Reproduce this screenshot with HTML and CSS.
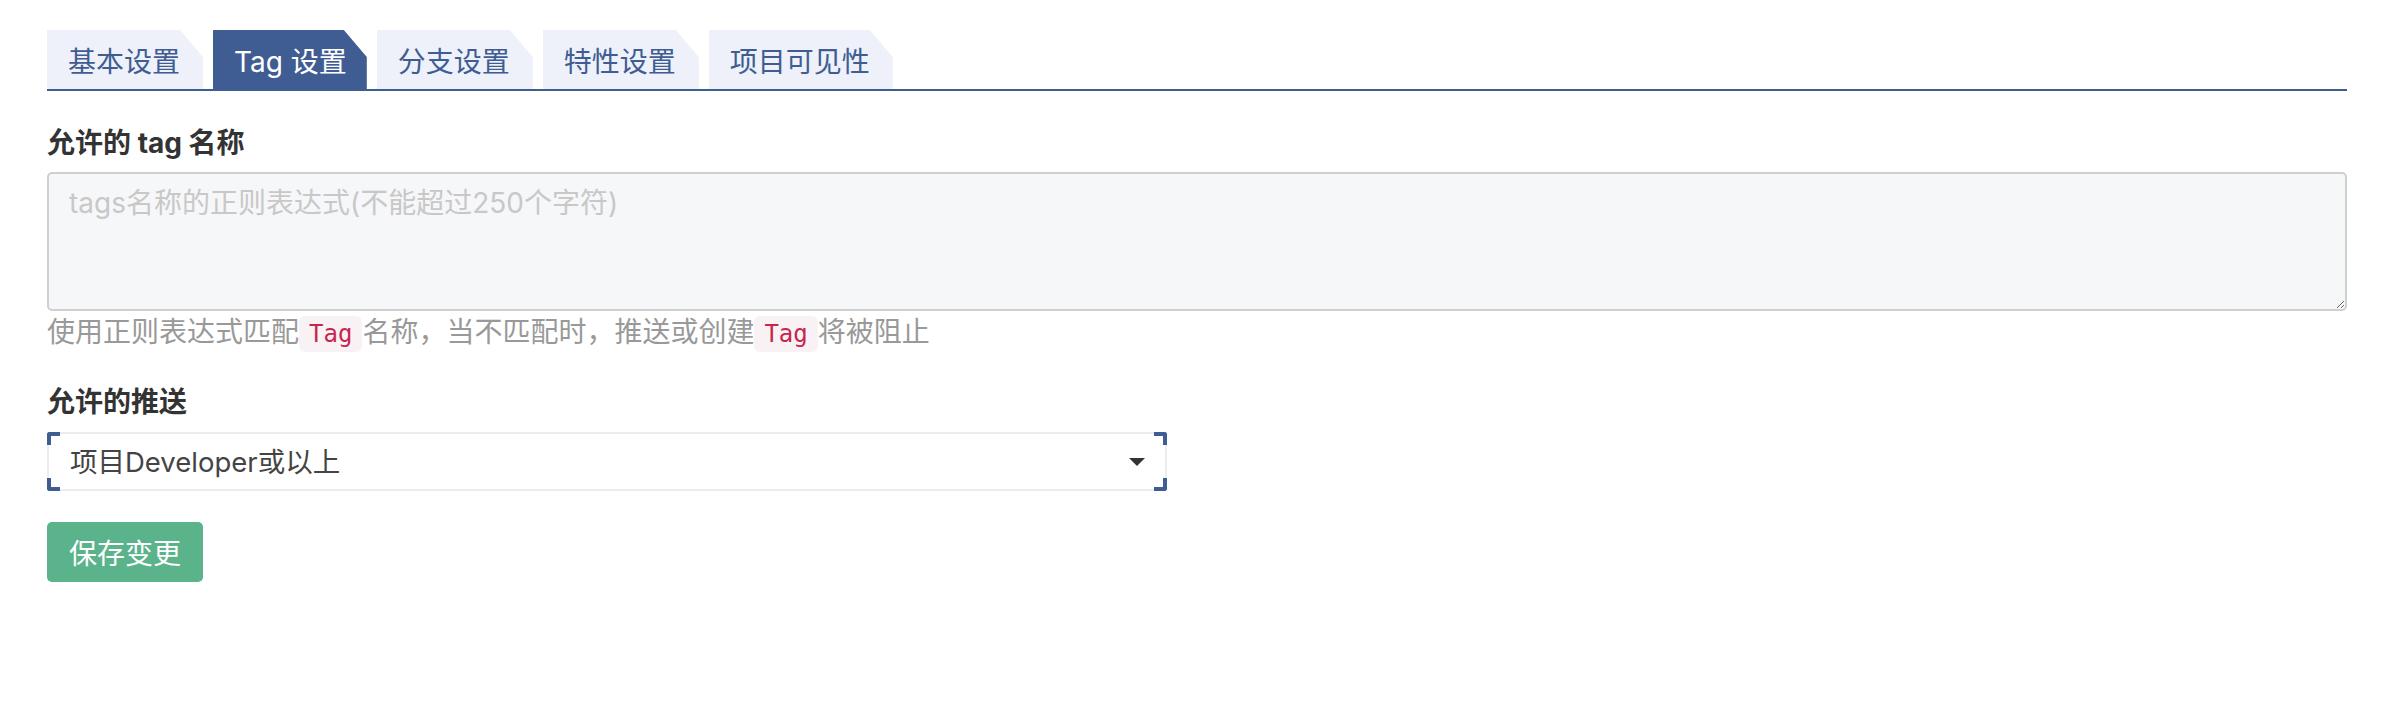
FILE: index.html
```html
<!DOCTYPE html>
<html lang="zh-CN">
<head>
<meta charset="utf-8">
<title>Tag 设置</title>
<link rel="stylesheet" href="styles.css">
</head>
<body>
<div class="page">
  <nav class="tabs">
    <a class="tab" href="#">基本设置</a>
    <a class="tab active" href="#">Tag 设置</a>
    <a class="tab" href="#">分支设置</a>
    <a class="tab" href="#">特性设置</a>
    <a class="tab" href="#">项目可见性</a>
  </nav>
  <form class="form">
    <div class="field">
      <label class="label" for="tagname">允许的 tag 名称</label>
      <textarea id="tagname" class="textarea" placeholder="tags名称的正则表达式(不能超过250个字符)"></textarea>
      <p class="help">使用正则表达式匹配<code>Tag</code>名称，当不匹配时，推送或创建<code>Tag</code>将被阻止</p>
    </div>
    <div class="field">
      <label class="label" for="push">允许的推送</label>
      <div class="select">
        <select id="push" class="select-input">
          <option>项目Developer或以上</option>
          <option>项目Master或以上</option>
        </select>
        <span class="corner tl"></span>
        <span class="corner tr"></span>
        <span class="corner bl"></span>
        <span class="corner br"></span>
      </div>
    </div>
    <button type="button" class="btn">保存变更</button>
  </form>
</div>
</body>
</html>
```

FILE: styles.css
```css
body {
  margin: 0;
  background: #fff;
  color: #333;
  font-family: Inter, "Noto Sans CJK SC", sans-serif;
}

.page {
  padding: 30px 35px 0 47px;
}

.tabs {
  display: flex;
  gap: 10px;
  border-bottom: 2px solid #3f5d92;
}

.tab {
  height: 59px;
  display: flex;
  align-items: center;
  padding: 0 23px 0 21px;
  font-size: 28px;
  color: #3f5d92;
  background: #eef1f9;
  text-decoration: none;
  clip-path: polygon(0 0, calc(100% - 23px) 0, 100% 27px, 100% 100%, 0 100%);
}

.tab.active {
  padding-right: 20px;
  background: #3f5d92;
  color: #fff;
}

.form {
  display: flex;
  flex-direction: column;
  align-items: flex-start;
}

.field {
  align-self: stretch;
}

.label {
  display: block;
  font-size: 28px;
  font-weight: 700;
  line-height: 36px;
  color: #333;
  margin: 34px 0 11px;
}

.field + .field .label {
  margin-top: 31px;
  margin-bottom: 12px;
}

.textarea {
  display: block;
  box-sizing: border-box;
  width: 100%;
  height: 139px;
  margin: 0;
  padding: 10px 20px;
  border: 2px solid #cfcfcf;
  border-radius: 5px;
  background: #f6f7f9;
  font-family: inherit;
  font-size: 28px;
  line-height: 1.4;
  color: #333;
}

.textarea::placeholder {
  color: #c8c8c8;
}

.help {
  margin: 2px 0 0;
  font-size: 28px;
  line-height: 38px;
  color: #999;
}

.help code {
  font-family: "DejaVu Sans Mono", monospace;
  font-size: 24px;
  color: #c7254e;
  background: #f9f2f4;
  padding: 4px 10px;
  border-radius: 6px;
}

.select {
  position: relative;
  width: 1120px;
}

.select::after {
  content: "";
  position: absolute;
  right: 22px;
  top: 26px;
  border-left: 8px solid transparent;
  border-right: 8px solid transparent;
  border-top: 8px solid #333;
  pointer-events: none;
}

.select-input {
  display: block;
  box-sizing: border-box;
  width: 100%;
  height: 59px;
  margin: 0;
  padding: 0 50px 0 21px;
  border: 2px solid #ececec;
  border-radius: 3px;
  background: #fff;
  font-family: inherit;
  font-size: 27.5px;
  color: #444;
  appearance: none;
  -webkit-appearance: none;
  outline: none;
}

.corner {
  position: absolute;
  width: 13px;
  height: 13px;
  border-color: #3f5d92;
  border-style: solid;
  border-width: 0;
  box-sizing: border-box;
}

.corner.tl { left: 0; top: 0; border-top-width: 4px; border-left-width: 4px; border-top-left-radius: 3px; }
.corner.tr { right: 0; top: 0; border-top-width: 4px; border-right-width: 4px; border-top-right-radius: 3px; }
.corner.bl { left: 0; bottom: 0; border-bottom-width: 4px; border-left-width: 4px; border-bottom-left-radius: 3px; }
.corner.br { right: 0; bottom: 0; border-bottom-width: 4px; border-right-width: 4px; border-bottom-right-radius: 3px; }

.btn {
  margin-top: 31px;
  height: 60px;
  padding: 0 22px;
  border: none;
  border-radius: 5px;
  background: #5ab38b;
  color: #fff;
  font-family: inherit;
  font-size: 28px;
  cursor: pointer;
}
```
